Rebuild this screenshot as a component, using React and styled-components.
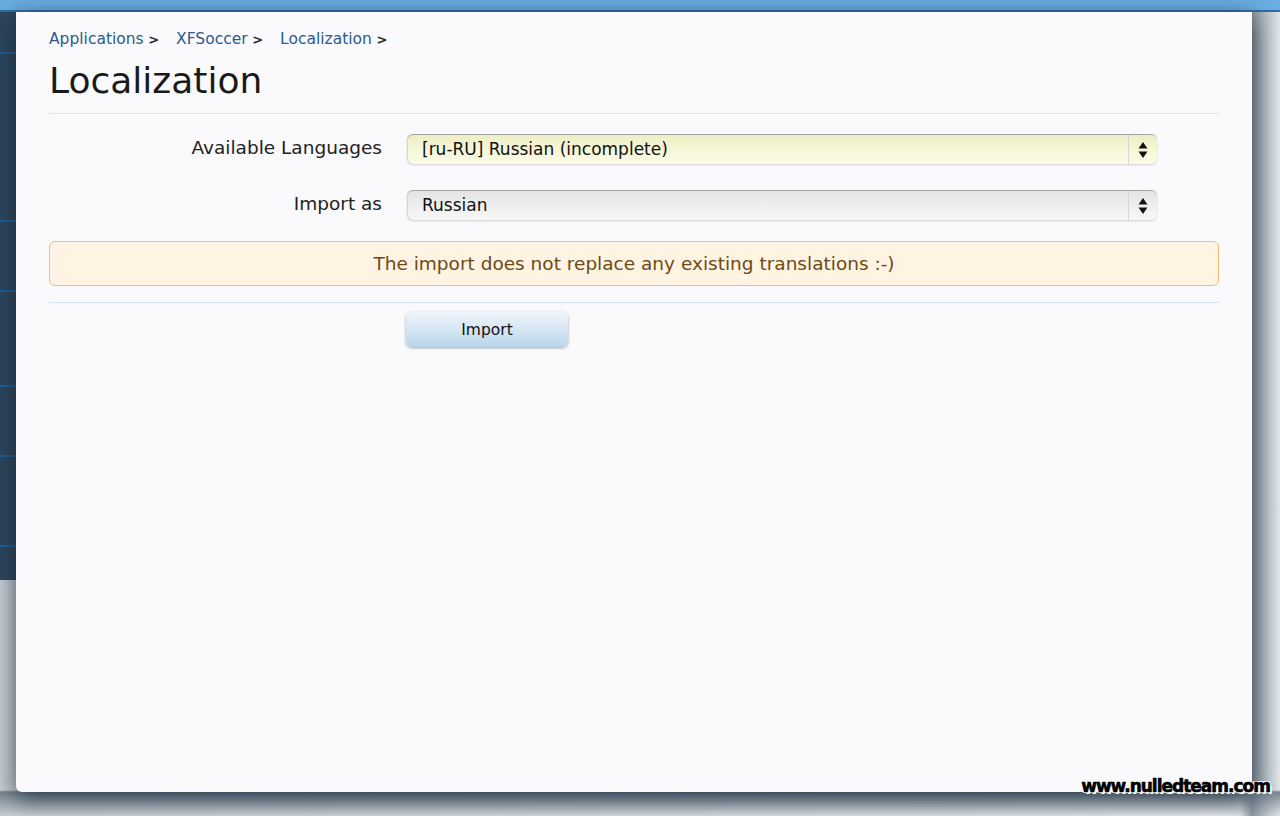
import styled, { createGlobalStyle } from 'styled-components'

const GlobalStyle = createGlobalStyle`
  html, body {
    margin: 0;
    padding: 0;
    width: 1280px;
    height: 816px;
    overflow: hidden;
    background: #dfe3e6;
    font-family: "DejaVu Sans", Verdana, sans-serif;
  }
`

const stripes = [52, 220, 290, 385, 455, 545]

function SelectArrows() {
  return (
    <svg width="10" height="18" viewBox="0 0 10 18">
      <path d="M5 1 L9.5 7.5 L0.5 7.5 Z" fill="#111" />
      <path d="M5 17 L9.5 10.5 L0.5 10.5 Z" fill="#111" />
    </svg>
  )
}

function App() {
  return (
    <Screen>
      <GlobalStyle />
      <TopBar />
      <Backdrop>
        <Sidebar>
          {stripes.map((y) => (
            <Stripe key={y} style={{ top: y - 12 }} />
          ))}
        </Sidebar>
      </Backdrop>

      <Dialog>
        <Breadcrumb>
          <Crumb>Applications</Crumb>
          <Crumb>XFSoccer</Crumb>
          <Crumb>Localization</Crumb>
        </Breadcrumb>
        <Title>Localization</Title>
        <Rule />

        <Form>
          <Label>Available Languages</Label>
          <Select tone="yellow">
            <SelectText>[ru-RU] Russian (incomplete)</SelectText>
            <ArrowBox><SelectArrows /></ArrowBox>
          </Select>

          <Label>Import as</Label>
          <Select>
            <SelectText>Russian</SelectText>
            <ArrowBox><SelectArrows /></ArrowBox>
          </Select>
        </Form>

        <Notice>The import does not replace any existing translations :-)</Notice>
        <Rule gap={16} />

        <Actions>
          <Button>Import</Button>
        </Actions>
      </Dialog>

      <Watermark>www.nulledteam.com</Watermark>
    </Screen>
  )
}

const Screen = styled.div`
  position: relative;
  width: 1280px;
  height: 816px;
  overflow: hidden;
  background:
    linear-gradient(to bottom, rgba(0, 0, 0, 0) 790px, rgba(110, 125, 137, 0.9) 792px, rgba(220, 224, 227, 0) 816px),
    linear-gradient(to right, #c9d0d5 0px, #e6e9eb 1240px, #8d99a2 1252px, #e4e7e9 1280px);
`

const TopBar = styled.div`
  height: 10px;
  background: #6aaee2;
  border-bottom: 2px solid #2f6ea6;
`

const Backdrop = styled.div`
  display: flex;
  height: 804px;
`

const Sidebar = styled.div`
  position: relative;
  width: 40px;
  height: 568px;
  background: #2c465b;
`

const Stripe = styled.div`
  position: absolute;
  left: 0;
  right: 0;
  height: 2px;
  background: #1f5f93;
`

const Dialog = styled.div`
  position: absolute;
  top: 12px;
  left: 16px;
  width: 1236px;
  height: 780px;
  box-sizing: border-box;
  padding: 17px 33px 0 33px;
  background: #fafafd;
  border-radius: 0 0 6px 6px;
  box-shadow: 0 6px 24px rgba(20, 38, 52, 0.8);
  display: flex;
  flex-direction: column;
`

const Breadcrumb = styled.div`
  display: flex;
  gap: 17px;
  font-size: 15.5px;
  line-height: 20px;
`

const Crumb = styled.span`
  color: #2b5b8c;
  &::after {
    content: ' >';
    color: #222;
    font-size: 13px;
    font-weight: bold;
  }
`

const Title = styled.h1`
  margin: 8px 0 0 0;
  font-size: 36px;
  font-weight: normal;
  line-height: 46px;
  color: #1a1a1a;
`

const Rule = styled.div`
  height: 1px;
  width: 1170px;
  background: #cfe5f6;
  margin-top: ${(p) => p.gap || 9}px;
`

const Form = styled.div`
  display: grid;
  grid-template-columns: 333px 750px;
  column-gap: 25px;
  row-gap: 26px;
  align-items: center;
  margin-top: 20px;
`

const Label = styled.div`
  text-align: right;
  font-size: 18.5px;
  line-height: 24px;
  padding-bottom: 3px;
  color: #222;
`

const Select = styled.div`
  height: 30px;
  box-sizing: border-box;
  display: flex;
  align-items: center;
  border-radius: 6px;
  border-top: 1px solid #a4a4a4;
  box-shadow: 0 1px 2px rgba(0, 0, 0, 0.18), inset 1px 0 0 #d4d4d4;
  background: ${(p) =>
    p.tone === 'yellow'
      ? 'linear-gradient(to bottom, #eeeec4 0%, #f6f6d8 50%, #fbfbe8 100%)'
      : 'linear-gradient(to bottom, #e4e4e4 0%, #eeeeee 50%, #f8f8f8 100%)'};
`

const SelectText = styled.span`
  flex: 1;
  padding-left: 15px;
  padding-bottom: 2px;
  font-size: 17px;
  color: #111;
`

const ArrowBox = styled.div`
  width: 28px;
  height: 100%;
  border-left: 1px solid #d6d6d6;
  display: flex;
  align-items: center;
  justify-content: center;
`

const Notice = styled.div`
  margin-top: 21px;
  width: 1170px;
  height: 45px;
  box-sizing: border-box;
  display: flex;
  align-items: center;
  justify-content: center;
  background: #fff3e4;
  border: 1px solid #f5bd72;
  border-radius: 6px;
  color: #6e4a12;
  font-size: 18.5px;
`

const Actions = styled.div`
  padding-left: 357px;
  margin-top: 9px;
`

const Button = styled.button`
  width: 162px;
  height: 35px;
  border: none;
  border-radius: 6px;
  background: linear-gradient(to bottom, #eef4fa 0%, #d6e6f3 50%, #b8d5ec 100%);
  box-shadow: 0 1px 3px rgba(0, 0, 0, 0.35);
  font-family: "DejaVu Sans", Verdana, sans-serif;
  font-size: 15.5px;
  color: #111;
`

const Watermark = styled.div`
  position: absolute;
  right: 10px;
  bottom: 20px;
  font-family: "DejaVu Sans", sans-serif;
  font-weight: 900;
  font-size: 17px;
  letter-spacing: -1px;
  color: #000;
  -webkit-text-stroke: 0.6px #000;
  text-shadow: 1px 1px 0 #fff, -1px -1px 0 #fff, 1px -1px 0 #fff, -1px 1px 0 #fff, 2px 2px 0 #fff;
`

export default App
